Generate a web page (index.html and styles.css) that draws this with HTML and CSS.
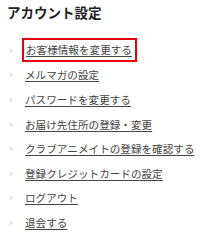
FILE: index.html
```html
<!DOCTYPE html>
<html lang="ja">
<head>
    <meta charset="UTF-8">
    <meta name="viewport" content="width=device-width, initial-scale=1.0">
    <title>アカウント設定</title>
    <link rel="stylesheet" href="styles.css">
</head>
<body>
    <div class="account">
        <h2 class="account__title">アカウント設定</h2>
        <ul class="account__list">
            <li class="account__item account__item--active"><a class="account__link" href="#">お客様情報を変更する</a></li>
            <li class="account__item"><a class="account__link" href="#">メルマガの設定</a></li>
            <li class="account__item"><a class="account__link" href="#">パスワードを変更する</a></li>
            <li class="account__item"><a class="account__link" href="#">お届け先住所の登録・変更</a></li>
            <li class="account__item"><a class="account__link" href="#">クラブアニメイトの登録を確認する</a></li>
            <li class="account__item"><a class="account__link" href="#">登録クレジットカードの設定</a></li>
            <li class="account__item"><a class="account__link" href="#">ログアウト</a></li>
            <li class="account__item"><a class="account__link" href="#">退会する</a></li>
        </ul>
    </div>
</body>
</html>
```

FILE: styles.css
```css
body {
    margin: 0;
    background: #fff;
    font-family: "Noto Sans CJK JP", "Noto Sans", sans-serif;
    font-kerning: none;
    font-feature-settings: "kern" 0, "palt" 0;
    color: #333;
}
.account {
    padding: 3px 0 0 7px;
}
.account .account__title {
    margin: 0;
    font-size: 13.5px;
    line-height: 18px;
    font-weight: bold;
    color: #222;
}
.account .account__list {
    list-style: none;
    margin: 17px 0 0;
    padding: 0;
}
.account .account__item {
    display: flex;
    align-items: center;
    height: 24.6px;
    font-size: 10.6px;
}
.account .account__item::before {
    content: "›";
    width: 16px;
    padding-left: 2px;
    font-family: "DejaVu Sans", sans-serif;
    font-size: 10px;
    color: #c4c4c4;
}
.account .account__link {
    color: #444;
    text-decoration: underline;
    text-underline-offset: 2px;
    line-height: 15px;
}
.account .account__item--active .account__link {
    margin-left: -3px;
    padding: 2px 3px 3px 2px;
    border: 2px solid #e60012;
}
```
